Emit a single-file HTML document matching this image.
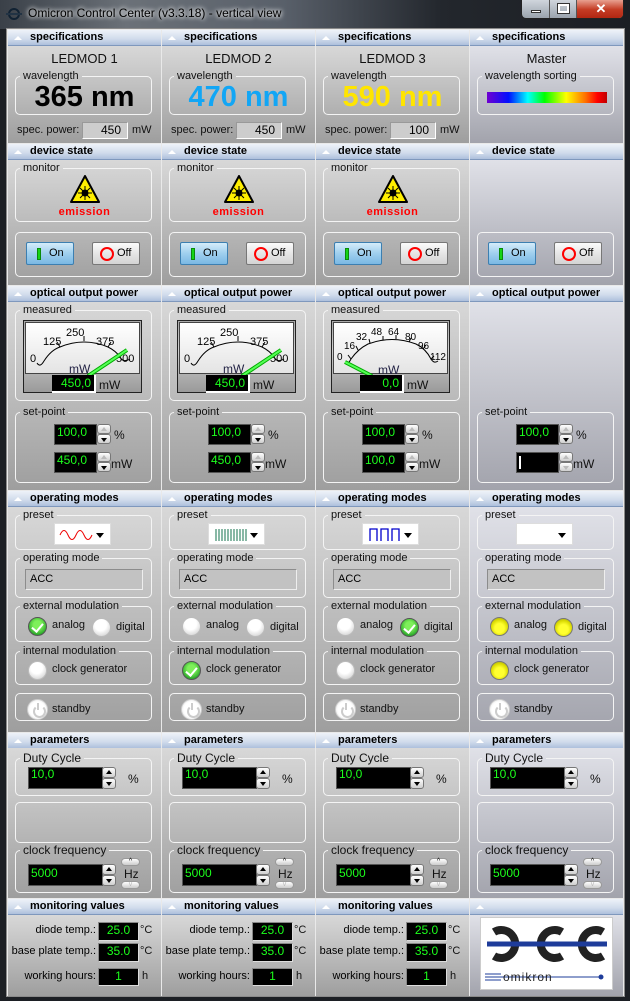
<!DOCTYPE html>
<html><head><meta charset="utf-8"><style>
*{box-sizing:border-box}
body{margin:0;width:630px;height:1001px;overflow:hidden;background:#1c1f24;font-family:"Liberation Sans",sans-serif;position:relative}
.tb{position:absolute;left:0;top:0;width:630px;height:29px;background:linear-gradient(90deg,#3a4048 0%,#6b7178 20%,#59606a 45%,#23272d 70%,#1b1e23 100%)}
.ttl{position:absolute;left:28px;top:6px;font-size:12px;color:#000;text-shadow:0 0 6px #fff,0 0 4px #fff}
.wrap{position:absolute;left:6px;top:28px;width:619px;height:969px;background:#e9e9e9;border:1px solid #8a8a8a}
.c{position:absolute;top:0;width:153px;height:996px}
.a{position:absolute}
.h{position:absolute;left:0;width:153px;height:16px;background:linear-gradient(#eef2f9,#d0dbeb 60%,#adc0dc);border-bottom:1px solid #7f98bd;font:bold 11px/15px "Liberation Sans",sans-serif;padding-left:22px;color:#000;white-space:nowrap}
.h:before{content:"";position:absolute;left:6px;top:6px;border:4px solid transparent;border-top:0;border-bottom:4px solid #fff}
.b{position:absolute;left:0;width:153px;background:linear-gradient(#d8d8d8,#9e9e9e)}
.b4{background:linear-gradient(#e0e1e8,#a2a3ac)}
fieldset{position:absolute;left:7px;width:137px;margin:0;padding:0;border:1px solid #f4f4f4;border-radius:5px;min-width:0}
legend{font:11px/13px "Liberation Sans",sans-serif;padding:0 3px;margin-left:4px;color:#111}
.t{position:absolute;font-size:11px;white-space:nowrap;color:#111}
.big{position:absolute;left:0;width:153px;text-align:center;font:bold 29px/30px "Liberation Sans",sans-serif}
.sp{position:absolute;top:122px;left:74px;width:46px;height:17px;background:#cdcdcd;border:1px solid #999;border-right-color:#fff;border-bottom-color:#fff;font-size:12px;text-align:right;padding-right:6px;line-height:15px}
.btn{position:absolute;top:242px;width:48px;height:23px;border:1px solid #777;border-radius:2px;font-size:11px;line-height:21px}
.on{left:18px;background:linear-gradient(#d5ecfa,#9fcfee 50%,#7ab8e4);border-color:#3c7fb1}
.off{left:84px;background:linear-gradient(#fbfbfb,#e6e6e6 50%,#d4d4d4)}
.on i{position:absolute;left:10px;top:5px;width:4px;height:12px;background:#16d416;border:1px solid #0a8a0a}
.on span{position:absolute;left:22px}
.off i{position:absolute;left:7px;top:4px;width:14px;height:14px;border:2px solid #f00;border-radius:50%}
.off span{position:absolute;left:24px}
.fld{position:absolute;background:#000;color:#1cff1c;font-size:12px;border:1px solid #555;padding-left:2px}
.su,.sd{position:absolute;width:14px;height:10px;border:1px solid #777;border-radius:3px;background:linear-gradient(#fff,#cfcfcf)}
.su:after,.sd:after{content:"";position:absolute;left:3px;top:2px;border:3px solid transparent;border-top:0;border-bottom:4px solid #000}
.sd:after{border-bottom:0;border-top:4px solid #000;top:3px}
.sl:after{border-bottom-color:#bbb}
.sdl:after{border-top-color:#bbb}
.rd{position:absolute;width:19px;height:19px;border-radius:50%;background:radial-gradient(circle at 45% 35%,#fff 40%,#dcdcdc 75%,#aaa);border:1px solid #bbb}
.rg{background:radial-gradient(circle at 50% 40%,#7ef05a 30%,#2aa62a 75%,#1a6a1a);border-color:#555}
.rg:after{content:"";position:absolute;left:5px;top:3px;width:5px;height:9px;border:solid #fff;border-width:0 2px 2px 0;transform:rotate(40deg)}
.ry{background:radial-gradient(circle at 50% 60%,#ffff30 35%,#d8d800 65%,#8a8a40);border-color:#777}
.pw{position:absolute;width:21px;height:21px;border-radius:50%;background:radial-gradient(#fff 55%,#ddd);border:1px solid #ccc}
.pw:after{content:"";position:absolute;left:5px;top:5px;width:9px;height:9px;border:2px solid #ccc;border-top-color:transparent;border-radius:50%}
.pw:before{content:"";position:absolute;left:9px;top:3px;width:2px;height:7px;background:#ccc}
.acc{position:absolute;left:17px;top:569px;width:118px;height:21px;background:#c2c2c2;border:1px solid #8c8c8c;border-right-color:#eee;border-bottom-color:#eee;font-size:11px;line-height:19px;padding-left:4px}
.dd{position:absolute;left:46px;top:523px;width:57px;height:22px;background:#fff;border:1px solid #ddd}
.dd:after{content:"";position:absolute;right:6px;top:9px;border:4px solid transparent;border-bottom:0;border-top:5px solid #000}
.hz{position:absolute;width:19px;height:8px;border:1px solid #999;border-radius:4px;background:linear-gradient(#fff,#ccc);font-size:7px;line-height:6px;text-align:center}
.mv{position:absolute;left:90px;width:41px;background:#000;color:#1cff1c;border:1px solid #888;border-right-color:#ddd;border-bottom-color:#ddd;text-align:center;font-size:12px}
.ml{position:absolute;width:88px;text-align:right;font-size:11px}
.meter{position:absolute;left:15px;top:320px;width:119px;height:73px;border:1px solid #222;background:linear-gradient(#a8a8a8,#d0d0d0 40%,#9a9a9a)}
.dial{position:absolute;left:1px;top:1px;width:115px;height:52px;background:linear-gradient(#fff,#e4e4e4);border:1px solid #444}
.ro{position:absolute;left:28px;top:54px;width:44px;height:18px;background:#000;color:#1cff1c;border-bottom:2px solid #fff;border-right:2px solid #fff;text-align:right;padding-right:3px;font-size:12px;line-height:16px}
</style></head><body>
<div class="tb">
<svg class="a" style="left:6px;top:8px" width="16" height="12"><circle cx="8" cy="6" r="5" fill="none" stroke="#123" stroke-width="2"/><line x1="0" y1="6" x2="16" y2="6" stroke="#234" stroke-width="2"/></svg>
<div class="ttl">Omicron Control Center (v3.3.18) - vertical view</div>
<div class="a" style="left:521px;top:0;width:103px;height:19px;border:1px solid #222;border-top:0;border-radius:0 0 5px 5px;overflow:hidden;background:linear-gradient(#cfd5dc,#9aa3ad)">
<div class="a" style="left:0;top:0;width:28px;height:19px;border-right:1px solid #555"><div class="a" style="left:9px;top:10px;width:10px;height:3px;background:#fff;border:1px solid #333"></div></div>
<div class="a" style="left:28px;top:0;width:27px;height:19px;border-right:1px solid #555"><div class="a" style="left:8px;top:4px;width:11px;height:9px;border:2px solid #fff;outline:1px solid #333"></div></div>
<div class="a" style="left:55px;top:0;width:48px;height:19px;background:linear-gradient(#e8a090,#c43c24 50%,#b02410);color:#fff;font:bold 13px/18px sans-serif;text-align:center">✕</div>
</div>
</div>
<div class="wrap"></div>

<!-- COLUMN 1 -->
<div class="c" style="left:8px">
<div class="h" style="top:30px">specifications</div>
<div class="b" style="top:46px;height:97px"></div>
<div class="t" style="left:0;width:153px;text-align:center;top:51px;font-size:13px">LEDMOD 1</div>
<fieldset style="top:70px;height:45px"><legend>wavelength</legend></fieldset>
<div class="big" style="top:82px;color:#000">365 nm</div>
<div class="t" style="left:9px;top:124px">spec. power:</div><div class="sp">450</div><div class="t" style="left:124px;top:124px">mW</div>

<div class="h" style="top:144px">device state</div>
<div class="b" style="top:160px;height:125px"></div>
<fieldset style="top:162px;height:60px"><legend>monitor</legend></fieldset>
<svg class="a" style="left:62px;top:175px" width="30" height="29"><path d="M15 1 L29 27 L1 27 Z" fill="#ffef00" stroke="#000" stroke-width="2" stroke-linejoin="round"/><circle cx="15" cy="18" r="3.5" fill="#000"/><g stroke="#000" stroke-width="1"><line x1="15" y1="11" x2="15" y2="25"/><line x1="8" y1="18" x2="22" y2="18"/><line x1="10" y1="13" x2="20" y2="23"/><line x1="20" y1="13" x2="10" y2="23"/></g></svg>
<div class="t" style="left:0;width:153px;text-align:center;top:206px;color:#f00;font-weight:bold;letter-spacing:.5px">emission</div>
<fieldset style="top:232px;height:45px"></fieldset>
<div class="btn on"><i></i><span>On</span></div><div class="btn off"><i></i><span>Off</span></div>

<div class="h" style="top:286px">optical output power</div>
<div class="b" style="top:302px;height:188px"></div>
<fieldset style="top:304px;height:97px"><legend>measured</legend></fieldset>
<div class="meter"><div class="dial"><svg width="115" height="52" style="position:absolute;left:0;top:0"><g font-size="11" font-family="Liberation Sans" fill="#000"><text x="4" y="39">0</text><text x="17" y="22">125</text><text x="40" y="13">250</text><text x="70" y="22">375</text><text x="90" y="39">500</text></g><path d="M11,40 Q14,45 18,38 Q25,27 34,24 Q58,14 82,24 Q90,28 94,34 Q97,40 104,36" fill="none" stroke="#000"/><g stroke="#000"><line x1="34" y1="24" x2="31" y2="19"/><line x1="58" y1="18" x2="58" y2="13"/><line x1="82" y1="24" x2="85" y2="19"/><line x1="94" y1="34" x2="97" y2="30"/></g><text x="43" y="50" font-size="12" fill="#224" font-family="Liberation Sans">mW</text><line x1="62" y1="53" x2="101" y2="27" stroke="#0a0" stroke-width="4"/><line x1="62" y1="53" x2="101" y2="27" stroke="#5f5" stroke-width="2"/></svg></div><div class="ro">450,0</div><div class="t" style="left:75px;top:57px;font-size:12px">mW</div></div>
<fieldset style="top:406px;height:77px"><legend>set-point</legend></fieldset>
<div class="fld" style="left:46px;top:424px;width:43px;height:21px">100,0</div><div class="su sl" style="left:89px;top:424px"></div><div class="sd" style="left:89px;top:434px"></div><div class="t" style="left:106px;top:428px;font-size:12px">%</div>
<div class="fld" style="left:46px;top:452px;width:43px;height:21px">450,0</div><div class="su sl" style="left:89px;top:452px"></div><div class="sd" style="left:89px;top:462px"></div><div class="t" style="left:103px;top:457px;font-size:12px">mW</div>

<div class="h" style="top:491px">operating modes</div>
<div class="b" style="top:507px;height:225px"></div>
<fieldset style="top:509px;height:41px"><legend>preset</legend></fieldset>
<div class="dd"><svg class="a" style="left:4px;top:4px" width="34" height="14"><path d="M1 7 Q5 -2 9 7 T17 7 T25 7 T33 7" fill="none" stroke="#e00"/></svg></div>
<fieldset style="top:552px;height:46px"><legend>operating mode</legend></fieldset><div class="acc">ACC</div>
<fieldset style="top:600px;height:42px"><legend>external modulation</legend></fieldset>
<div class="rd rg" style="left:20px;top:617px"></div><div class="t" style="left:44px;top:619px">analog</div><div class="rd" style="left:84px;top:618px"></div><div class="t" style="left:108px;top:621px">digital</div>
<fieldset style="top:645px;height:40px"><legend>internal modulation</legend></fieldset>
<div class="rd" style="left:20px;top:661px"></div><div class="t" style="left:44px;top:663px">clock generator</div>
<fieldset style="top:693px;height:28px"></fieldset>
<div class="pw" style="left:19px;top:699px"></div><div class="t" style="left:44px;top:703px">standby</div>

<div class="h" style="top:733px">parameters</div>
<div class="b" style="top:748px;height:150px"></div>
<fieldset style="top:752px;height:44px"><legend style="font-size:12px">Duty Cycle</legend></fieldset>
<div class="fld" style="left:20px;top:767px;width:75px;height:22px;line-height:12px">10,0</div><div class="su" style="left:94px;top:767px;height:11px"></div><div class="sd" style="left:94px;top:778px;height:11px"></div><div class="t" style="left:120px;top:772px;font-size:12px">%</div>
<fieldset style="top:802px;height:41px"></fieldset>
<fieldset style="top:844px;height:49px"><legend style="font-size:12px">clock frequency</legend></fieldset>
<div class="fld" style="left:20px;top:864px;width:75px;height:22px;line-height:16px">5000</div><div class="su" style="left:94px;top:864px;height:11px"></div><div class="sd" style="left:94px;top:875px;height:11px"></div>
<div class="hz" style="left:113px;top:858px">^</div><div class="t" style="left:116px;top:867px;font-size:12px">Hz</div><div class="hz" style="left:113px;top:881px;color:#bbb">v</div>

<div class="h" style="top:899px">monitoring values</div>
<div class="b" style="top:915px;height:81px"></div>
<div class="ml" style="left:0;top:924px">diode temp.:</div><div class="mv" style="top:922px;height:19px">25.0</div><div class="t" style="left:132px;top:924px">°C</div>
<div class="ml" style="left:0;top:945px">base plate temp.:</div><div class="mv" style="top:943px;height:19px">35.0</div><div class="t" style="left:132px;top:945px">°C</div>
<div class="ml" style="left:0;top:970px">working hours:</div><div class="mv" style="top:968px;height:18px">1</div><div class="t" style="left:134px;top:970px">h</div>
</div>

<!-- COLUMN 2 -->
<div class="c" style="left:162px">
<div class="h" style="top:30px">specifications</div>
<div class="b" style="top:46px;height:97px"></div>
<div class="t" style="left:0;width:153px;text-align:center;top:51px;font-size:13px">LEDMOD 2</div>
<fieldset style="top:70px;height:45px"><legend>wavelength</legend></fieldset>
<div class="big" style="top:82px;color:#12a6f5">470 nm</div>
<div class="t" style="left:9px;top:124px">spec. power:</div><div class="sp">450</div><div class="t" style="left:124px;top:124px">mW</div>

<div class="h" style="top:144px">device state</div>
<div class="b" style="top:160px;height:125px"></div>
<fieldset style="top:162px;height:60px"><legend>monitor</legend></fieldset>
<svg class="a" style="left:62px;top:175px" width="30" height="29"><path d="M15 1 L29 27 L1 27 Z" fill="#ffef00" stroke="#000" stroke-width="2" stroke-linejoin="round"/><circle cx="15" cy="18" r="3.5" fill="#000"/><g stroke="#000" stroke-width="1"><line x1="15" y1="11" x2="15" y2="25"/><line x1="8" y1="18" x2="22" y2="18"/><line x1="10" y1="13" x2="20" y2="23"/><line x1="20" y1="13" x2="10" y2="23"/></g></svg>
<div class="t" style="left:0;width:153px;text-align:center;top:206px;color:#f00;font-weight:bold;letter-spacing:.5px">emission</div>
<fieldset style="top:232px;height:45px"></fieldset>
<div class="btn on"><i></i><span>On</span></div><div class="btn off"><i></i><span>Off</span></div>

<div class="h" style="top:286px">optical output power</div>
<div class="b" style="top:302px;height:188px"></div>
<fieldset style="top:304px;height:97px"><legend>measured</legend></fieldset>
<div class="meter"><div class="dial"><svg width="115" height="52" style="position:absolute;left:0;top:0"><g font-size="11" font-family="Liberation Sans" fill="#000"><text x="4" y="39">0</text><text x="17" y="22">125</text><text x="40" y="13">250</text><text x="70" y="22">375</text><text x="90" y="39">500</text></g><path d="M11,40 Q14,45 18,38 Q25,27 34,24 Q58,14 82,24 Q90,28 94,34 Q97,40 104,36" fill="none" stroke="#000"/><g stroke="#000"><line x1="34" y1="24" x2="31" y2="19"/><line x1="58" y1="18" x2="58" y2="13"/><line x1="82" y1="24" x2="85" y2="19"/><line x1="94" y1="34" x2="97" y2="30"/></g><text x="43" y="50" font-size="12" fill="#224" font-family="Liberation Sans">mW</text><line x1="62" y1="53" x2="101" y2="27" stroke="#0a0" stroke-width="4"/><line x1="62" y1="53" x2="101" y2="27" stroke="#5f5" stroke-width="2"/></svg></div><div class="ro">450,0</div><div class="t" style="left:75px;top:57px;font-size:12px">mW</div></div>
<fieldset style="top:406px;height:77px"><legend>set-point</legend></fieldset>
<div class="fld" style="left:46px;top:424px;width:43px;height:21px">100,0</div><div class="su sl" style="left:89px;top:424px"></div><div class="sd" style="left:89px;top:434px"></div><div class="t" style="left:106px;top:428px;font-size:12px">%</div>
<div class="fld" style="left:46px;top:452px;width:43px;height:21px">450,0</div><div class="su sl" style="left:89px;top:452px"></div><div class="sd" style="left:89px;top:462px"></div><div class="t" style="left:103px;top:457px;font-size:12px">mW</div>

<div class="h" style="top:491px">operating modes</div>
<div class="b" style="top:507px;height:225px"></div>
<fieldset style="top:509px;height:41px"><legend>preset</legend></fieldset>
<div class="dd"><svg class="a" style="left:6px;top:5px" width="32" height="12"><g stroke="#3a8a6a" stroke-width="1.2"><path d="M1 0V12M4 0V12M7 0V12M10 0V12M13 0V12M16 0V12M19 0V12M22 0V12M25 0V12M28 0V12M31 0V12"/></g></svg></div>
<fieldset style="top:552px;height:46px"><legend>operating mode</legend></fieldset><div class="acc">ACC</div>
<fieldset style="top:600px;height:42px"><legend>external modulation</legend></fieldset>
<div class="rd" style="left:20px;top:617px"></div><div class="t" style="left:44px;top:619px">analog</div><div class="rd" style="left:84px;top:618px"></div><div class="t" style="left:108px;top:621px">digital</div>
<fieldset style="top:645px;height:40px"><legend>internal modulation</legend></fieldset>
<div class="rd rg" style="left:20px;top:661px"></div><div class="t" style="left:44px;top:663px">clock generator</div>
<fieldset style="top:693px;height:28px"></fieldset>
<div class="pw" style="left:19px;top:699px"></div><div class="t" style="left:44px;top:703px">standby</div>

<div class="h" style="top:733px">parameters</div>
<div class="b" style="top:748px;height:150px"></div>
<fieldset style="top:752px;height:44px"><legend style="font-size:12px">Duty Cycle</legend></fieldset>
<div class="fld" style="left:20px;top:767px;width:75px;height:22px;line-height:12px">10,0</div><div class="su" style="left:94px;top:767px;height:11px"></div><div class="sd" style="left:94px;top:778px;height:11px"></div><div class="t" style="left:120px;top:772px;font-size:12px">%</div>
<fieldset style="top:802px;height:41px"></fieldset>
<fieldset style="top:844px;height:49px"><legend style="font-size:12px">clock frequency</legend></fieldset>
<div class="fld" style="left:20px;top:864px;width:75px;height:22px;line-height:16px">5000</div><div class="su" style="left:94px;top:864px;height:11px"></div><div class="sd" style="left:94px;top:875px;height:11px"></div>
<div class="hz" style="left:113px;top:858px">^</div><div class="t" style="left:116px;top:867px;font-size:12px">Hz</div><div class="hz" style="left:113px;top:881px;color:#bbb">v</div>

<div class="h" style="top:899px">monitoring values</div>
<div class="b" style="top:915px;height:81px"></div>
<div class="ml" style="left:0;top:924px">diode temp.:</div><div class="mv" style="top:922px;height:19px">25.0</div><div class="t" style="left:132px;top:924px">°C</div>
<div class="ml" style="left:0;top:945px">base plate temp.:</div><div class="mv" style="top:943px;height:19px">35.0</div><div class="t" style="left:132px;top:945px">°C</div>
<div class="ml" style="left:0;top:970px">working hours:</div><div class="mv" style="top:968px;height:18px">1</div><div class="t" style="left:134px;top:970px">h</div>
</div>

<!-- COLUMN 3 -->
<div class="c" style="left:316px">
<div class="h" style="top:30px">specifications</div>
<div class="b" style="top:46px;height:97px"></div>
<div class="t" style="left:0;width:153px;text-align:center;top:51px;font-size:13px">LEDMOD 3</div>
<fieldset style="top:70px;height:45px"><legend>wavelength</legend></fieldset>
<div class="big" style="top:82px;color:#ffe500">590 nm</div>
<div class="t" style="left:9px;top:124px">spec. power:</div><div class="sp">100</div><div class="t" style="left:124px;top:124px">mW</div>

<div class="h" style="top:144px">device state</div>
<div class="b" style="top:160px;height:125px"></div>
<fieldset style="top:162px;height:60px"><legend>monitor</legend></fieldset>
<svg class="a" style="left:62px;top:175px" width="30" height="29"><path d="M15 1 L29 27 L1 27 Z" fill="#ffef00" stroke="#000" stroke-width="2" stroke-linejoin="round"/><circle cx="15" cy="18" r="3.5" fill="#000"/><g stroke="#000" stroke-width="1"><line x1="15" y1="11" x2="15" y2="25"/><line x1="8" y1="18" x2="22" y2="18"/><line x1="10" y1="13" x2="20" y2="23"/><line x1="20" y1="13" x2="10" y2="23"/></g></svg>
<div class="t" style="left:0;width:153px;text-align:center;top:206px;color:#f00;font-weight:bold;letter-spacing:.5px">emission</div>
<fieldset style="top:232px;height:45px"></fieldset>
<div class="btn on"><i></i><span>On</span></div><div class="btn off"><i></i><span>Off</span></div>

<div class="h" style="top:286px">optical output power</div>
<div class="b" style="top:302px;height:188px"></div>
<fieldset style="top:304px;height:97px"><legend>measured</legend></fieldset>
<div class="meter"><div class="dial"><svg width="115" height="52" style="position:absolute;left:0;top:0"><g font-size="10" font-family="Liberation Sans" fill="#000"><text x="3" y="37">0</text><text x="10" y="26">16</text><text x="22" y="17">32</text><text x="37" y="12">48</text><text x="54" y="12">64</text><text x="71" y="17">80</text><text x="84" y="26">96</text><text x="96" y="37">112</text></g><path d="M11,40 Q14,42 17,36 Q24,26 34,21 Q58,12 82,21 Q92,26 97,36 Q100,41 104,38" fill="none" stroke="#000"/><g stroke="#000"><line x1="17" y1="36" x2="14" y2="32"/><line x1="24" y1="27" x2="22" y2="23"/><line x1="36" y1="20" x2="35" y2="16"/><line x1="49" y1="17" x2="49" y2="13"/><line x1="62" y1="16" x2="62" y2="12"/><line x1="75" y1="19" x2="77" y2="15"/><line x1="89" y1="26" x2="92" y2="22"/><line x1="97" y1="36" x2="100" y2="33"/></g><text x="44" y="51" font-size="12" fill="#224" font-family="Liberation Sans">mW</text><line x1="11" y1="39" x2="38" y2="53" stroke="#0a0" stroke-width="4"/><line x1="11" y1="39" x2="38" y2="53" stroke="#5f5" stroke-width="2"/></svg></div><div class="ro">0,0</div><div class="t" style="left:75px;top:57px;font-size:12px">mW</div></div>
<fieldset style="top:406px;height:77px"><legend>set-point</legend></fieldset>
<div class="fld" style="left:46px;top:424px;width:43px;height:21px">100,0</div><div class="su sl" style="left:89px;top:424px"></div><div class="sd" style="left:89px;top:434px"></div><div class="t" style="left:106px;top:428px;font-size:12px">%</div>
<div class="fld" style="left:46px;top:452px;width:43px;height:21px">100,0</div><div class="su sl" style="left:89px;top:452px"></div><div class="sd" style="left:89px;top:462px"></div><div class="t" style="left:103px;top:457px;font-size:12px">mW</div>

<div class="h" style="top:491px">operating modes</div>
<div class="b" style="top:507px;height:225px"></div>
<fieldset style="top:509px;height:41px"><legend>preset</legend></fieldset>
<div class="dd"><svg class="a" style="left:6px;top:4px" width="32" height="14"><path d="M1 13V1H8V13M12 13V1H19V13M23 13V1H30V13" fill="none" stroke="#00c" stroke-width="1.3"/></svg></div>
<fieldset style="top:552px;height:46px"><legend>operating mode</legend></fieldset><div class="acc">ACC</div>
<fieldset style="top:600px;height:42px"><legend>external modulation</legend></fieldset>
<div class="rd" style="left:20px;top:617px"></div><div class="t" style="left:44px;top:619px">analog</div><div class="rd rg" style="left:84px;top:618px"></div><div class="t" style="left:108px;top:621px">digital</div>
<fieldset style="top:645px;height:40px"><legend>internal modulation</legend></fieldset>
<div class="rd" style="left:20px;top:661px"></div><div class="t" style="left:44px;top:663px">clock generator</div>
<fieldset style="top:693px;height:28px"></fieldset>
<div class="pw" style="left:19px;top:699px"></div><div class="t" style="left:44px;top:703px">standby</div>

<div class="h" style="top:733px">parameters</div>
<div class="b" style="top:748px;height:150px"></div>
<fieldset style="top:752px;height:44px"><legend style="font-size:12px">Duty Cycle</legend></fieldset>
<div class="fld" style="left:20px;top:767px;width:75px;height:22px;line-height:12px">10,0</div><div class="su" style="left:94px;top:767px;height:11px"></div><div class="sd" style="left:94px;top:778px;height:11px"></div><div class="t" style="left:120px;top:772px;font-size:12px">%</div>
<fieldset style="top:802px;height:41px"></fieldset>
<fieldset style="top:844px;height:49px"><legend style="font-size:12px">clock frequency</legend></fieldset>
<div class="fld" style="left:20px;top:864px;width:75px;height:22px;line-height:16px">5000</div><div class="su" style="left:94px;top:864px;height:11px"></div><div class="sd" style="left:94px;top:875px;height:11px"></div>
<div class="hz" style="left:113px;top:858px">^</div><div class="t" style="left:116px;top:867px;font-size:12px">Hz</div><div class="hz" style="left:113px;top:881px;color:#bbb">v</div>

<div class="h" style="top:899px">monitoring values</div>
<div class="b" style="top:915px;height:81px"></div>
<div class="ml" style="left:0;top:924px">diode temp.:</div><div class="mv" style="top:922px;height:19px">25.0</div><div class="t" style="left:132px;top:924px">°C</div>
<div class="ml" style="left:0;top:945px">base plate temp.:</div><div class="mv" style="top:943px;height:19px">35.0</div><div class="t" style="left:132px;top:945px">°C</div>
<div class="ml" style="left:0;top:970px">working hours:</div><div class="mv" style="top:968px;height:18px">1</div><div class="t" style="left:134px;top:970px">h</div>
</div>

<!-- COLUMN 4 -->
<div class="c" style="left:470px">
<div class="h" style="top:30px">specifications</div>
<div class="b b4" style="top:46px;height:97px"></div>
<div class="t" style="left:0;width:153px;text-align:center;top:51px;font-size:13px">Master</div>
<fieldset style="top:70px;height:45px"><legend>wavelength sorting</legend></fieldset>
<div class="a" style="left:17px;top:92px;width:120px;height:11px;background:linear-gradient(90deg,#7000d0,#0010ff 18%,#00ffff 34%,#00ff00 48%,#ffff00 66%,#ff7000 82%,#ff0000 92%,#c00000)"></div>

<div class="h" style="top:144px">device state</div>
<div class="b b4" style="top:160px;height:125px"></div>
<fieldset style="top:232px;height:45px"></fieldset>
<div class="btn on"><i></i><span>On</span></div><div class="btn off"><i></i><span>Off</span></div>

<div class="h" style="top:286px">optical output power</div>
<div class="b b4" style="top:302px;height:188px"></div>
<fieldset style="top:406px;height:77px"><legend>set-point</legend></fieldset>
<div class="fld" style="left:46px;top:424px;width:43px;height:21px">100,0</div><div class="su sl" style="left:89px;top:424px"></div><div class="sd" style="left:89px;top:434px"></div><div class="t" style="left:106px;top:428px;font-size:12px">%</div>
<div class="fld" style="left:46px;top:452px;width:43px;height:21px"><div class="a" style="left:2px;top:3px;width:2px;height:13px;background:#fff"></div></div><div class="su sl" style="left:89px;top:452px"></div><div class="sd sdl" style="left:89px;top:462px"></div><div class="t" style="left:103px;top:457px;font-size:12px">mW</div>

<div class="h" style="top:491px">operating modes</div>
<div class="b b4" style="top:507px;height:225px"></div>
<fieldset style="top:509px;height:41px"><legend>preset</legend></fieldset>
<div class="dd"></div>
<fieldset style="top:552px;height:46px"><legend>operating mode</legend></fieldset><div class="acc">ACC</div>
<fieldset style="top:600px;height:42px"><legend>external modulation</legend></fieldset>
<div class="rd ry" style="left:20px;top:617px"></div><div class="t" style="left:44px;top:619px">analog</div><div class="rd ry" style="left:84px;top:618px"></div><div class="t" style="left:108px;top:621px">digital</div>
<fieldset style="top:645px;height:40px"><legend>internal modulation</legend></fieldset>
<div class="rd ry" style="left:20px;top:661px"></div><div class="t" style="left:44px;top:663px">clock generator</div>
<fieldset style="top:693px;height:28px"></fieldset>
<div class="pw" style="left:19px;top:699px"></div><div class="t" style="left:44px;top:703px">standby</div>

<div class="h" style="top:733px">parameters</div>
<div class="b b4" style="top:748px;height:150px"></div>
<fieldset style="top:752px;height:44px"><legend style="font-size:12px">Duty Cycle</legend></fieldset>
<div class="fld" style="left:20px;top:767px;width:75px;height:22px;line-height:12px">10,0</div><div class="su" style="left:94px;top:767px;height:11px"></div><div class="sd" style="left:94px;top:778px;height:11px"></div><div class="t" style="left:120px;top:772px;font-size:12px">%</div>
<fieldset style="top:802px;height:41px"></fieldset>
<fieldset style="top:844px;height:49px"><legend style="font-size:12px">clock frequency</legend></fieldset>
<div class="fld" style="left:20px;top:864px;width:75px;height:22px;line-height:16px">5000</div><div class="su" style="left:94px;top:864px;height:11px"></div><div class="sd" style="left:94px;top:875px;height:11px"></div>
<div class="hz" style="left:113px;top:858px">^</div><div class="t" style="left:116px;top:867px;font-size:12px">Hz</div><div class="hz" style="left:113px;top:881px;color:#bbb">v</div>

<div class="h" style="top:899px"></div>
<div class="b b4" style="top:915px;height:81px"></div>
<div class="a" style="left:10px;top:917px;width:133px;height:73px;background:#fff;border:1px solid #ccc">
<svg width="131" height="71" style="position:absolute;left:0;top:0"><g fill="none" stroke="#222" stroke-width="8"><path d="M13 14 A14 14 0 1 1 13 38"/><path d="M81 14 A14 14 0 1 0 81 38"/><path d="M122 14 A14 14 0 1 0 122 38"/></g><line x1="6" y1="26" x2="126" y2="26" stroke="#1e3c9a" stroke-width="5"/><g stroke="#1e3c9a"><line x1="4" y1="56" x2="20" y2="56"/><line x1="4" y1="59" x2="20" y2="59"/><line x1="4" y1="62" x2="20" y2="62"/><line x1="20" y1="59" x2="120" y2="59"/></g><circle cx="120" cy="59" r="2.5" fill="#1e3c9a"/><text x="22" y="63" font-size="12" font-family="Liberation Sans" fill="#222" letter-spacing="1">omikron</text></svg>
</div>
</div>
</body></html>
